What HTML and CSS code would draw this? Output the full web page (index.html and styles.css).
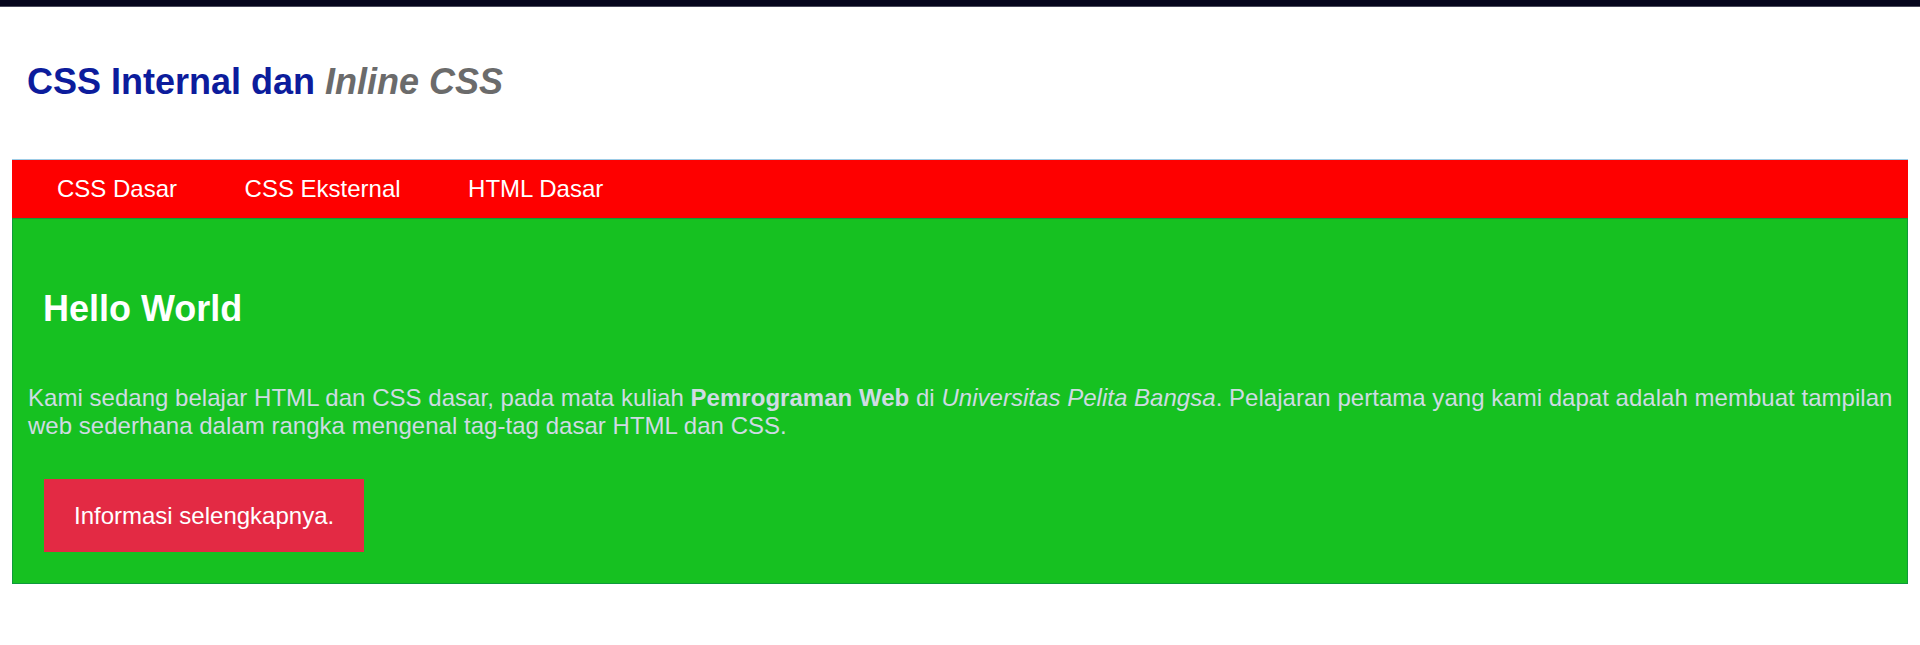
FILE: index.html
```html
<!DOCTYPE html>
<html lang="id">
<head>
    <meta charset="UTF-8">
    <meta name="viewport" content="width=device-width, initial-scale=1.0">
    <title>CSS Internal dan Inline CSS</title>
    <link rel="stylesheet" href="styles.css">
</head>
<body>

    <div class="topbar"></div>

    <div class="page">
        <!-- Header -->
        <div class="header">
            <h1>CSS Internal dan <i class="inline-css">Inline CSS</i></h1>
        </div>

        <!-- Navigasi -->
        <ul class="nav">
            <li><a href="#">CSS Dasar</a></li>
            <li><a href="#">CSS Eksternal</a></li>
            <li><a href="#">HTML Dasar</a></li>
        </ul>

        <!-- Konten -->
        <div class="content">
            <h2>Hello World</h2>
            <p>Kami sedang belajar HTML dan CSS dasar, pada mata kuliah <b>Pemrograman Web</b> di <i>Universitas Pelita Bangsa</i>. Pelajaran pertama yang kami dapat adalah membuat tampilan web sederhana dalam rangka mengenal tag-tag dasar HTML dan CSS.</p>
            <a href="#" class="btn">Informasi selengkapnya.</a>
        </div>
    </div>

</body>
</html>
```

FILE: styles.css
```css
* {
    box-sizing: border-box;
}

body {
    margin: 0;
    font-family: "Liberation Sans", Arial, sans-serif;
    background-color: #fff;
}

.topbar {
    height: 7px;
    background-color: #05051c;
    border-bottom: 1px solid #4b4b5c;
}

.page {
    padding: 0 12px;
}

.header {
    height: 152px;
    padding: 0 15px;
}

.header h1 {
    margin: 0;
    padding-top: 54px;
    font-size: 36px;
    color: #0c1c9c;
}

.header .inline-css {
    color: #6b6b6b;
}

.nav {
    display: flex;
    gap: 67.5px;
    list-style: none;
    margin: 0;
    padding: 15px 0 15px 45px;
    background-color: #fe0000;
    border-top: 1px solid #9ccbe6;
}

.nav li a {
    color: #fff;
    font-size: 24px;
    text-decoration: none;
}

.content {
    background-color: #16c121;
    border: 1px solid #0e9a3c;
    padding: 15px;
}

.content h2 {
    margin: 54px 0 0 15px;
    font-size: 36px;
    color: #fff;
}

.content p {
    margin: 54px -10px 0 0;
    font-size: 24px;
    letter-spacing: 0.03px;
    color: #cfdbe3;
}

.btn {
    display: inline-block;
    margin: 39px 0 16px 16px;
    padding: 22.5px 30px;
    background-color: #e32a44;
    color: #fff;
    font-size: 24px;
    text-decoration: none;
}
```
